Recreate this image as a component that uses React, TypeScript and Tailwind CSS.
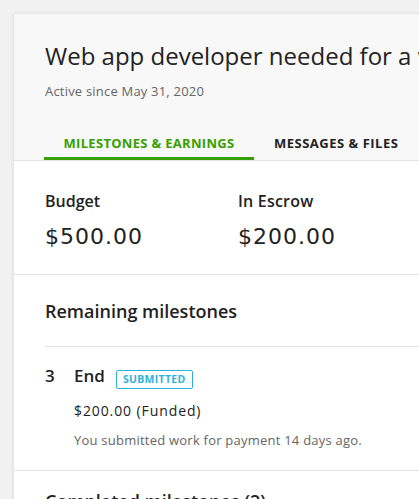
import React from 'react';

const font = { fontFamily: '"Open Sans", "Noto Sans", sans-serif' };
const wide = { fontFamily: '"DejaVu Sans", "Open Sans", sans-serif' };

export default function App() {
  return (
    <div className="min-h-screen bg-[#f1f1f1] pl-[14px] pt-[14px] overflow-hidden" style={font}>
      <div className="w-[620px] bg-white shadow-[0_0_4px_rgba(0,0,0,0.12)] rounded-[3px]">
        <div className="bg-[#f8f8f8] border-b border-[#e4e4e4] rounded-t-[3px]">
          <div className="px-[31px] pt-[26px]">
            <h1 className="text-[24px] leading-[32px] text-[#222] whitespace-nowrap">
              Web app developer needed for a web app
            </h1>
            <p className="mt-[10px] text-[13px] leading-[18px] text-[#656565] tracking-[0.2px]">Active since May 31, 2020</p>
          </div>
          <div className="flex pl-[30px] mt-[33px]">
            <div className="w-[210px] h-[27px] flex items-start justify-center border-b-[3px] border-[#37a000] text-[13px] leading-[20px] font-bold text-[#37a000] tracking-[0.3px]">
              MILESTONES &amp; EARNINGS
            </div>
            <div className="ml-[20px] h-[27px] flex items-start border-b-[3px] border-transparent text-[13px] leading-[20px] font-bold text-[#222] tracking-[0.5px]">
              MESSAGES &amp; FILES
            </div>
          </div>
        </div>

        <div className="flex px-[31px] pt-[29px] pb-[22px] border-b border-[#e4e4e4]">
          <div className="w-[193px]">
            <div className="text-[16px] leading-[22px] font-semibold text-[#222]">Budget</div>
            <div className="mt-[10px] text-[22px] leading-[30px] text-[#222] tracking-[1px]" style={wide}>$500.00</div>
          </div>
          <div>
            <div className="text-[16px] leading-[22px] font-semibold text-[#222] tracking-[0.2px]">In Escrow</div>
            <div className="mt-[10px] text-[22px] leading-[30px] text-[#222] tracking-[1px]" style={wide}>$200.00</div>
          </div>
        </div>

        <div className="pl-[31px]">
          <div className="pt-[24px] pb-[23px] border-b border-[#e4e4e4]">
            <h2 className="text-[18px] leading-[24px] font-semibold text-[#222]">Remaining milestones</h2>
          </div>
        </div>

        <div className="px-[31px] pt-[17px] pb-[21px] border-b border-[#e4e4e4]">
          <div className="flex items-start">
            <span className="w-[29px] text-[17px] leading-[24px] font-semibold text-[#222]">3</span>
            <span className="text-[17px] leading-[24px] font-semibold text-[#222]">End</span>
            <span className="ml-[11px] mt-[6px] h-[19px] px-[6px] flex items-center border border-[#30b3da] rounded-[2px] text-[10.5px] font-bold text-[#30b3da] tracking-[0.3px]">
              SUBMITTED
            </span>
          </div>
          <div className="pl-[29px]">
            <div className="mt-[12px] text-[14px] leading-[20px] text-[#222] tracking-[0.9px]">$200.00 (Funded)</div>
            <div className="mt-[10px] text-[13px] leading-[18px] text-[#656565] tracking-[0.23px]">
              You submitted work for payment 14 days ago.
            </div>
          </div>
        </div>

        <div className="px-[31px] pt-[18px] pb-[20px]">
          <h2 className="text-[18px] leading-[24px] font-semibold text-[#222]">Completed milestones (2)</h2>
        </div>
      </div>
    </div>
  );
}
